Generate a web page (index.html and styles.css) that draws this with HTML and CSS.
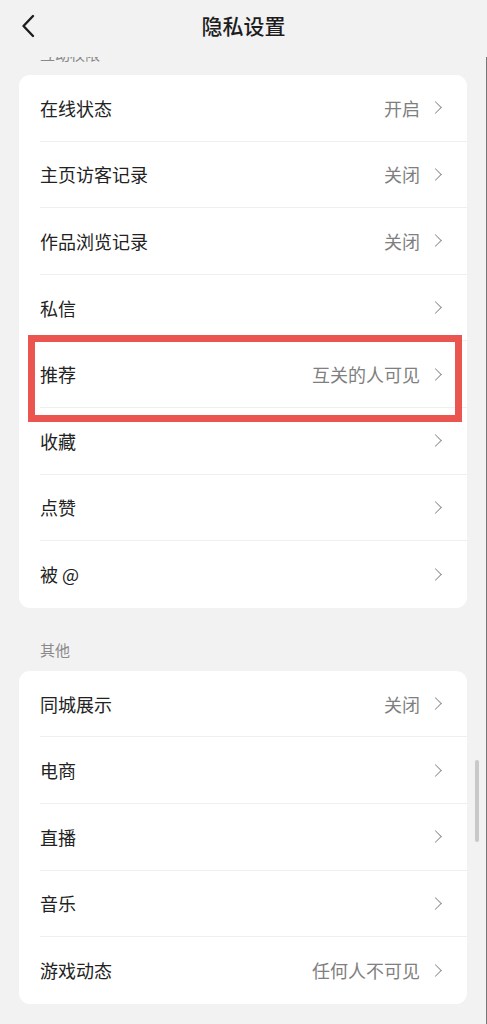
FILE: index.html
```html
<!DOCTYPE html>
<html lang="zh-CN">
<head>
    <meta charset="UTF-8">
    <meta name="viewport" content="width=device-width, initial-scale=1.0">
    <title>隐私设置</title>
    <link rel="stylesheet" href="styles.css">
</head>
<body>
    <div class="header">
        <svg class="back" width="14" height="24" viewBox="0 0 14 24">
            <path d="M12 2 L2.5 12 L12 22" fill="none" stroke="#1d1d1d" stroke-width="2.4" stroke-linecap="round" stroke-linejoin="round"/>
        </svg>
        <div class="title">隐私设置</div>
    </div>

    <div class="main">
        <div class="section-title">互动权限</div>
        <div class="card">
            <div class="row"><span class="label">在线状态</span><span class="value">开启</span><span class="arrow"></span></div>
            <div class="row"><span class="label">主页访客记录</span><span class="value">关闭</span><span class="arrow"></span></div>
            <div class="row"><span class="label">作品浏览记录</span><span class="value">关闭</span><span class="arrow"></span></div>
            <div class="row"><span class="label">私信</span><span class="value"></span><span class="arrow"></span></div>
            <div class="row marked">
                <span class="label">推荐</span><span class="value">互关的人可见</span><span class="arrow"></span>
                <div class="highlight"></div>
            </div>
            <div class="row"><span class="label">收藏</span><span class="value"></span><span class="arrow"></span></div>
            <div class="row"><span class="label">点赞</span><span class="value"></span><span class="arrow"></span></div>
            <div class="row"><span class="label">被 @</span><span class="value"></span><span class="arrow"></span></div>
        </div>

        <div class="section-title gap">其他</div>
        <div class="card">
            <div class="row"><span class="label">同城展示</span><span class="value">关闭</span><span class="arrow"></span></div>
            <div class="row"><span class="label">电商</span><span class="value"></span><span class="arrow"></span></div>
            <div class="row"><span class="label">直播</span><span class="value"></span><span class="arrow"></span></div>
            <div class="row"><span class="label">音乐</span><span class="value"></span><span class="arrow"></span></div>
            <div class="row"><span class="label">游戏动态</span><span class="value">任何人不可见</span><span class="arrow"></span></div>
        </div>
    </div>

    <div class="scrollbar"></div>
    <div class="edge"></div>
</body>
</html>
```

FILE: styles.css
```css
body {
    margin: 0;
    width: 487px;
    min-height: 1024px;
    background-color: #f2f2f2;
    font-family: "Noto Sans CJK SC", "Noto Sans", sans-serif;
    overflow: hidden;
}
.header {
    position: relative;
    z-index: 1;
    height: 57px;
    background-color: #f2f2f2;
    display: flex;
    align-items: center;
    justify-content: center;
}
.back {
    position: absolute;
    left: 21px;
    top: 14px;
}
.title {
    font-size: 21px;
    font-weight: 500;
    color: #1d1d1d;
    margin-top: -7px;
}
.main {
    margin-top: -18px;
}
.section-title {
    height: 30px;
    line-height: 30px;
    padding-left: 40px;
    margin-bottom: 6px;
    font-size: 15px;
    color: #8a8a8a;
}
.section-title.gap {
    margin-top: 27px;
}
.card {
    margin: 0 20px 0 19px;
    background-color: #fff;
    border-radius: 11px;
}
.row {
    margin-left: 21px;
    padding-right: 24px;
    height: 66.6px;
    box-sizing: border-box;
    border-bottom: 1px solid #efefef;
    display: flex;
    align-items: center;
}
.row:last-child {
    border-bottom: none;
}
.label {
    flex: 1;
    font-size: 18px;
    color: #222;
}
.value {
    font-size: 18px;
    color: #7f7f7f;
    margin-right: 11px;
}
.arrow {
    width: 8px;
    height: 8px;
    border-top: 1.8px solid #939393;
    border-right: 1.8px solid #939393;
    transform: rotate(45deg);
    margin-right: 3px;
}
.marked {
    position: relative;
}
.highlight {
    position: absolute;
    left: -12px;
    top: -6px;
    width: 420px;
    height: 73px;
    border: 7px solid #ea5550;
}
.scrollbar {
    position: absolute;
    left: 475px;
    top: 760px;
    width: 4px;
    height: 82px;
    border-radius: 2px;
    background-color: #c9c9c9;
}
.edge {
    position: absolute;
    left: 486px;
    top: 0;
    width: 1px;
    height: 1024px;
    background-color: #777;
}
```
